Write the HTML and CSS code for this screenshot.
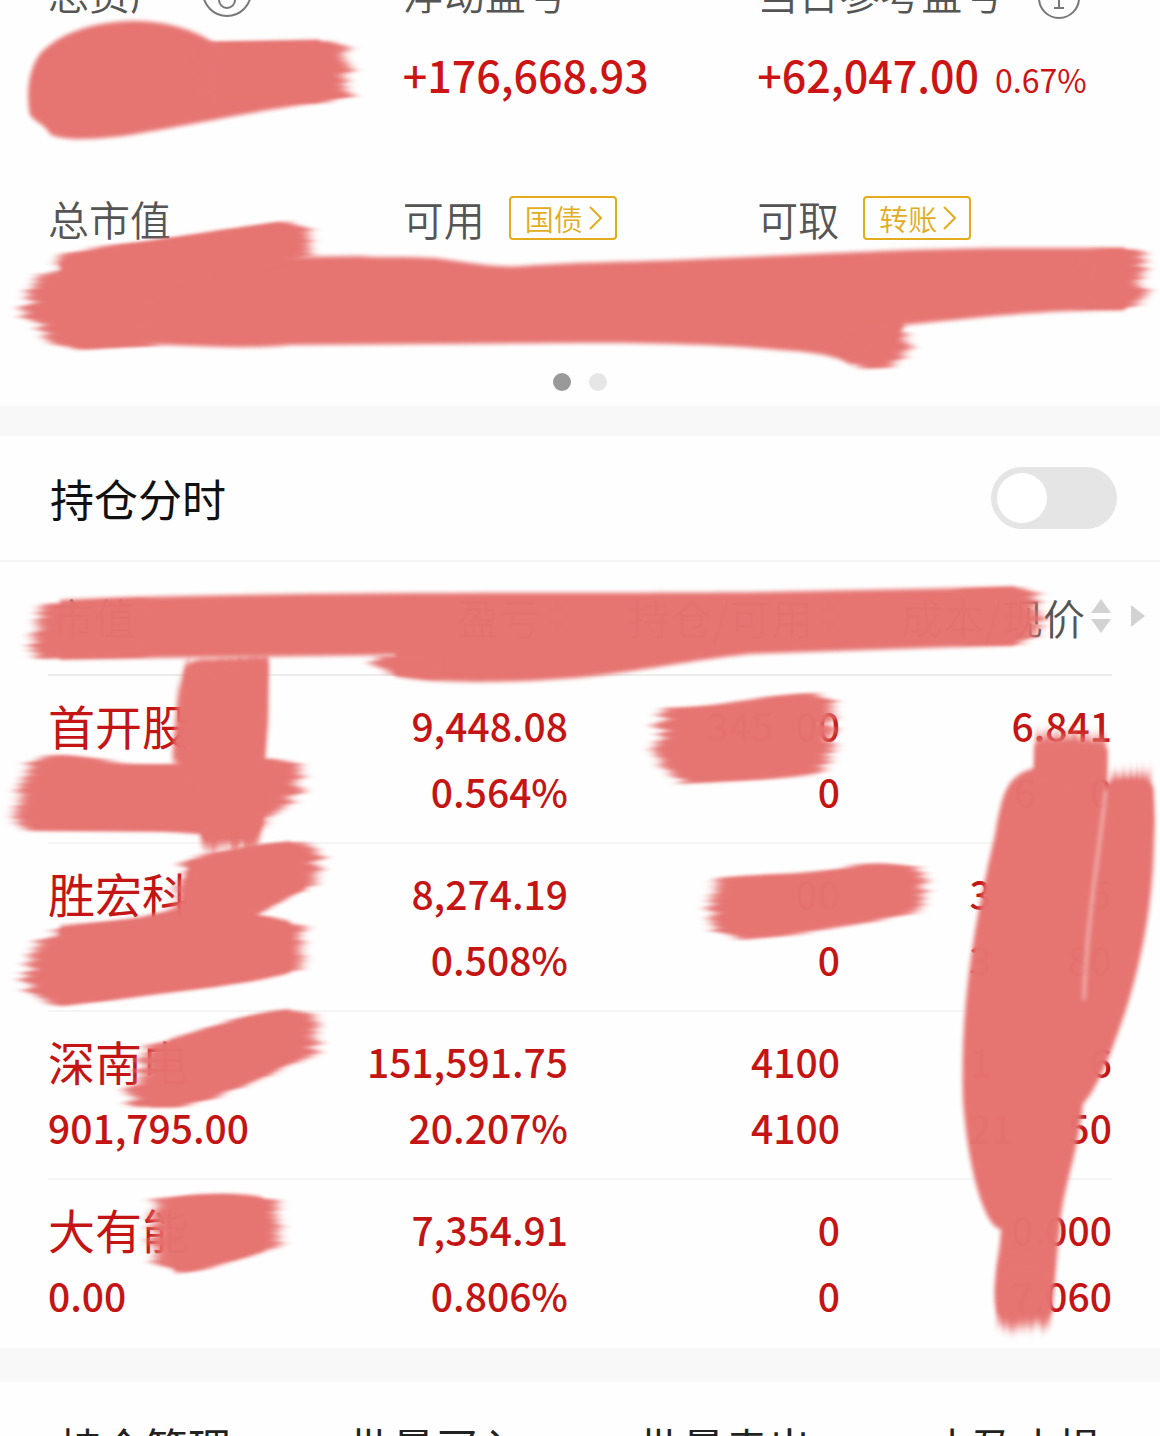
FILE: index.html
```html
<!DOCTYPE html>
<html lang="zh-CN">
<head>
<meta charset="utf-8">
<meta name="viewport" content="width=device-width, initial-scale=1">
<title>持仓</title>
<link rel="stylesheet" href="styles.css">
</head>
<body>
<main class="page">
  <section class="summary">
    <div class="summary-row summary-row-cut">
      <div class="label">总资产
        <svg class="eye" viewBox="0 0 52 52" aria-hidden="true"><circle cx="26" cy="26" r="24"/><circle cx="26" cy="34" r="8"/></svg>
      </div>
      <div class="label">浮动盈亏</div>
      <div class="label">当日参考盈亏
        <svg class="info" viewBox="0 0 44 44" aria-hidden="true"><circle cx="22" cy="22" r="20"/><path d="M18 18h4v14M17 32h10M22 10v3"/></svg>
      </div>
    </div>
    <div class="summary-row amounts">
      <div></div>
      <div class="amount">+176,668.93</div>
      <div class="amount">+62,047.00<span class="rate">0.67%</span></div>
    </div>
    <div class="summary-row second">
      <div class="label">总市值</div>
      <div class="label">可用
        <button class="tag" type="button">国债<svg viewBox="0 0 14 24" aria-hidden="true"><path d="M1 1l11 11L1 23"/></svg></button>
      </div>
      <div class="label">可取
        <button class="tag" type="button">转账<svg viewBox="0 0 14 24" aria-hidden="true"><path d="M1 1l11 11L1 23"/></svg></button>
      </div>
    </div>
    <div class="pager"><i class="dot dot-on"></i><i class="dot"></i></div>
  </section>

  <section class="switch-row">
    <label for="timeline">持仓分时</label>
    <input class="switch" id="timeline" type="checkbox" role="switch">
  </section>

  <section class="holdings">
    <table>
      <colgroup><col><col class="col-profit"><col class="col-count"><col class="col-price"></colgroup>
      <thead>
        <tr>
          <th scope="col"><div class="head head-left">市值</div></th>
          <th scope="col"><div class="head">盈亏<span class="sort"></span></div></th>
          <th scope="col"><div class="head">持仓/可用<span class="sort"></span></div></th>
          <th scope="col"><div class="head">成本/现价<span class="sort"></span><span class="more"></span></div></th>
        </tr>
      </thead>
      <tbody>
        <tr>
          <td><div class="name">首开股</div><div></div></td>
          <td><div>9,448.08</div><div>0.564%</div></td>
          <td><div>345<span class="gap"></span>00</div><div>0</div></td>
          <td><div>6.841</div><div>6<span class="gap gap-small"></span>0</div></td>
        </tr>
        <tr>
          <td><div class="name">胜宏科</div><div></div></td>
          <td><div>8,274.19</div><div>0.508%</div></td>
          <td><div>00</div><div>0</div></td>
          <td><div>3<span class="gap gap-wide"></span>5</div><div>3<span class="gap gap-mid"></span>80</div></td>
        </tr>
        <tr>
          <td><div class="name">深南电</div><div>901,795.00</div></td>
          <td><div>151,591.75</div><div>20.207%</div></td>
          <td><div>4100</div><div>4100</div></td>
          <td><div>1<span class="gap gap-wide"></span>6</div><div>21<span class="gap gap-small"></span>50</div></td>
        </tr>
        <tr>
          <td><div class="name">大有能</div><div>0.00</div></td>
          <td><div>7,354.91</div><div>0.806%</div></td>
          <td><div>0</div><div>0</div></td>
          <td><div>0.000</div><div>7.060</div></td>
        </tr>
      </tbody>
    </table>
  </section>

  <nav class="actions">
    <button type="button">持仓管理</button>
    <button type="button">批量买入</button>
    <button type="button">批量卖出</button>
    <button type="button">止盈止损</button>
  </nav>

  <svg class="marker" viewBox="0 0 1160 1436" aria-hidden="true">
    <defs>
      <filter id="brush-h" filterUnits="userSpaceOnUse" x="0" y="0" width="1160" height="1436" color-interpolation-filters="sRGB">
        <feTurbulence type="fractalNoise" baseFrequency="0.004 0.18" numOctaves="2" seed="4"/>
        <feColorMatrix values="1 0 0 0 0  0 0 0 0 0.5  0 0 0 0 0.5  0 0 0 0 1" result="n"/>
        <feGaussianBlur in="SourceGraphic" stdDeviation="5 1" result="s"/>
        <feDisplacementMap in="s" in2="n" scale="26" xChannelSelector="R" yChannelSelector="G" result="d"/>
        <feGaussianBlur in="d" stdDeviation="3 1"/>
      </filter>
      <filter id="brush-v" filterUnits="userSpaceOnUse" x="0" y="0" width="1160" height="1436" color-interpolation-filters="sRGB">
        <feTurbulence type="fractalNoise" baseFrequency="0.18 0.004" numOctaves="2" seed="7"/>
        <feColorMatrix values="0 0 0 0 0.5  0 1 0 0 0  0 0 0 0 0.5  0 0 0 0 1" result="n"/>
        <feGaussianBlur in="SourceGraphic" stdDeviation="2 5" result="s"/>
        <feDisplacementMap in="s" in2="n" scale="12" xChannelSelector="R" yChannelSelector="G" result="d"/>
        <feGaussianBlur in="d" stdDeviation="1 3"/>
      </filter>
    </defs>
    <g class="strokes">
      <g class="smooth">
        <path d="M30 115C25 90 30 60 46 48C70 28 103 21 138 21C172 22 198 32 214 43L320 40V102C250 112 190 125 130 135C95 140 60 141 50 134C46 125 35 122 30 115Z"/>
        <path d="M60 262L120 248L280 223V257L360 256C378 258 400 256 435 258C470 263 500 268 524 266C570 262 640 262 700 259C800 255 900 249 1000 248L1125 248V310C1050 310 1000 315 904 325L885 362L850 364C840 358 820 352 780 350C720 344 640 343 580 343L290 345C240 350 190 345 130 344L75 346Z"/>
        <path d="M60 600C300 590 600 594 760 592L1015 587V645L750 654C690 660 640 672 575 678C500 684 430 683 395 676V655L60 659Z"/>
        <path d="M1035 745C1060 738 1104 743 1107 750L1106 785C1115 778 1150 776 1153 788C1158 870 1148 940 1126 1010C1112 1050 1100 1085 1083 1104C1077 1160 1063 1185 1060 1227L1051 1315H998C990 1290 999 1265 1001 1229C985 1228 968 1170 963 1100C960 1000 975 920 995 835C1003 785 1010 775 1035 768Z"/>
        <path d="M186 670Q188 662 200 660L268 658L263 765L262 825L250 840H205L195 800L182 765Z"/>
        <path d="M60 926C110 922 150 920 180 909L190 862C225 853 260 846 290 842L306 888L255 915L290 922V972C240 986 140 995 60 1004Z"/>
        <path d="M170 1040C210 1030 250 1012 290 1010L300 1056C270 1072 230 1095 175 1106L150 1106Z"/>
        <path d="M170 1200C190 1194 240 1192 262 1198L264 1250C240 1258 215 1268 175 1272Z"/>
      </g>
      <g class="ragged">
        <path d="M210 42L330 41L348 50V96L325 103H200Z"/>
        <path d="M62 254L90 248L290 221L312 230V256L120 300H45Z"/>
        <path d="M38 275L150 262V346L80 350L50 344L40 325L22 316Z"/>
        <path d="M1090 249H1130L1144 256V298L1125 309H1080Z"/>
        <path d="M850 325L905 325V358L890 368L860 369Z"/>
        <path d="M40 604L150 598V657L45 659L30 650L37 630Z"/>
        <path d="M960 589L1020 587L1038 594V636L1020 645H960Z"/>
        <path d="M375 656H440V680L390 674L372 665Z"/>
        <path d="M35 758C70 748 100 765 140 764H190L270 758L298 763V794L262 826L235 836L165 832L25 831L14 820L22 782Z"/>
        <path d="M184 862C210 850 270 842 300 842L318 847V882C290 895 265 905 255 915L303 926L300 969C240 986 140 995 60 1006C40 1005 26 990 26 975C29 950 39 935 70 926C110 922 150 920 175 909Z"/>
        <path d="M150 1046C210 1030 250 1012 290 1010L314 1015V1055C270 1072 230 1095 180 1107L132 1107L130 1088Z"/>
        <path d="M155 1200C190 1194 240 1192 278 1201L278 1247C250 1255 215 1268 175 1273L156 1262L148 1220Z"/>
        <path d="M662 708C730 706 780 692 820 693L834 702V748L815 774C770 780 720 782 685 784L665 766L654 752Z"/>
        <path d="M718 878C760 872 810 876 850 866C870 862 900 862 920 868V910C880 922 800 936 740 940L714 930L710 912Z"/>
      </g>
      <g class="upright">
        <path d="M185 665L268 658V720L262 790V830L255 848H202L195 790L172 760L178 690Z"/>
        <path d="M1036 734L1106 738V790H1034Z"/>
        <path d="M1110 776L1150 772L1153 830H1108Z"/>
        <path d="M999 1260H1053L1050 1324L1010 1330L997 1324Z"/>
      </g>
    </g>
    <path class="sliver" d="M1106 790C1098 860 1086 930 1084 1000"/>
  </svg>
</main>
</body>
</html>
```
FILE: styles.css
```css
* {
  box-sizing: border-box;
}

body {
  margin: 0;
  background: #fefefe;
  color: #555;
  font-family: "Noto Sans CJK SC", "Noto Sans", sans-serif;
}

button {
  margin: 0;
  border: 0;
  padding: 0;
  background: none;
  color: inherit;
  font: inherit;
}

.page {
  position: relative;
  height: 100vh;
  overflow: hidden;
}

/* Account summary */

.summary {
  border-bottom: 30px solid #f8f8f8;
}

.summary-row {
  display: grid;
  grid-template-columns: repeat(3, 1fr);
  padding: 0 48px;
}

/* First line is scrolled partly out of view */
.summary-row-cut {
  grid-template-rows: 16px;
  align-items: end;
}

.label {
  display: flex;
  align-items: center;
  height: 48px;
  font-size: 41px;
  font-weight: 350;
  line-height: 48px;
  white-space: nowrap;
}

.label svg {
  flex: none;
  fill: none;
  stroke: #777;
  stroke-width: 2;
}

.label .eye {
  width: 52px;
  height: 52px;
  margin-left: 30px;
}

.label .info {
  width: 44px;
  height: 44px;
  margin: 12px 0 0 34px;
}

.amounts {
  margin-top: 30px;
}

.amount {
  color: #cc1414;
  font-size: 43px;
  font-weight: 500;
  line-height: 56px;
  white-space: nowrap;
}

.rate {
  margin-left: 16px;
  font-size: 32px;
  font-weight: 400;
}

.second {
  margin-top: 87px;
}

.label .tag {
  display: flex;
  align-items: center;
  gap: 6px;
  height: 44px;
  margin-left: 24px;
  border: 2px solid #e3ac1c;
  border-radius: 4px;
  padding: 0 12px 0 14px;
  color: #e3ac1c;
  font-size: 29px;
  line-height: 40px;
}

.tag svg {
  width: 14px;
  height: 24px;
  stroke: #e3ac1c;
}

.pager {
  display: flex;
  justify-content: center;
  gap: 18px;
  padding: 131px 0 15px;
}

.dot {
  width: 18px;
  height: 18px;
  border-radius: 50%;
  background: #e6e6e6;
}

.dot-on {
  background: #999;
}

/* Timeline switch */

.switch-row {
  display: flex;
  align-items: center;
  justify-content: space-between;
  height: 126px;
  border-bottom: 2px solid #f4f4f4;
  padding: 0 43px 0 50px;
  color: #111;
  font-size: 44px;
}

.switch {
  appearance: none;
  width: 126px;
  height: 62px;
  margin: 0;
  border-radius: 31px;
  padding: 6px;
  background: #e5e5e5;
}

.switch::before {
  content: "";
  display: block;
  width: 50px;
  height: 50px;
  border-radius: 50%;
  background: #fff;
}

/* Holdings */

.holdings {
  border-bottom: 34px solid #f8f8f8;
  padding: 0 48px;
}

table {
  width: 100%;
  border-collapse: separate;
  border-spacing: 0;
  table-layout: fixed;
}

.col-profit {
  width: 240px;
}

.col-count,
.col-price {
  width: 272px;
}

th {
  height: 114px;
  border-bottom: 2px solid #ececec;
  padding: 0 0 4px;
  font-size: 42px;
  font-weight: 350;
  text-align: right;
}

.head {
  display: flex;
  align-items: center;
  justify-content: flex-end;
  white-space: nowrap;
}

.head-left {
  justify-content: flex-start;
  padding-left: 4px;
}

.sort {
  display: grid;
  gap: 6px;
  margin: 0 1px 0 6px;
}

.sort::before,
.sort::after {
  content: "";
  width: 20px;
  height: 14px;
  background: #d2d2d2;
  clip-path: polygon(50% 0, 100% 100%, 0 100%);
}

.sort::after {
  clip-path: polygon(0 0, 100% 0, 50% 100%);
}

.more {
  width: 14px;
  height: 22px;
  margin: 0 -33px 0 19px;
  background: #d2d2d2;
  clip-path: polygon(0 0, 100% 50%, 0 100%);
}

td {
  height: 168px;
  border-bottom: 2px solid #f4f4f4;
  padding: 16px 0;
  color: #c41414;
  font-size: 39px;
  font-weight: 500;
  text-align: right;
  vertical-align: top;
  white-space: nowrap;
}

td:first-child {
  text-align: left;
}

tbody tr:last-child td {
  border-bottom: 0;
}

td div {
  height: 66px;
  line-height: 66px;
}

td .name {
  font-size: 47px;
  font-weight: 400;
}

.gap {
  display: inline-block;
  width: 22px;
}

.gap-small {
  width: 54px;
}

.gap-mid {
  width: 76px;
}

.gap-wide {
  width: 98px;
}

/* Bottom actions */

.actions {
  display: grid;
  grid-template-columns: repeat(4, 1fr);
}

.actions button {
  height: 128px;
  color: #222;
  font-size: 43px;
}

/* Marker strokes painted over the page */

.marker {
  position: absolute;
  top: 0;
  left: 0;
  width: 100%;
  pointer-events: none;
}

.strokes {
  fill: #e67370;
  opacity: 0.98;
}

.smooth {
  filter: blur(2px);
}

.ragged {
  filter: url(#brush-h);
}

.upright {
  filter: url(#brush-v);
}

.sliver {
  fill: none;
  stroke: #fff;
  stroke-width: 3;
  opacity: 0.5;
  filter: blur(2px);
}
```
